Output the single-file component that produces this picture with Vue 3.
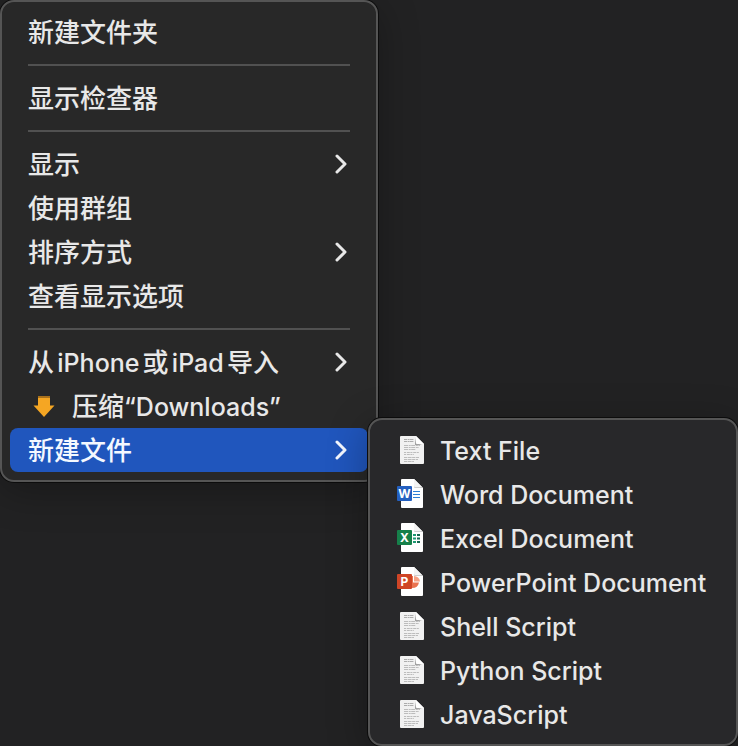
<script setup>
const groups = [
  [{ label: '新建文件夹' }],
  [{ label: '显示检查器' }],
  [
    { label: '显示', more: true },
    { label: '使用群组' },
    { label: '排序方式', more: true },
    { label: '查看显示选项' },
  ],
  [
    { label: '从iPhone或iPad导入', more: true },
    { label: '压缩“Downloads”', arrow: true },
    { label: '新建文件', more: true, active: true },
  ],
]

const files = [
  { label: 'Text File', kind: 'text' },
  { label: 'Word Document', kind: 'word', letter: 'W' },
  { label: 'Excel Document', kind: 'excel', letter: 'X' },
  { label: 'PowerPoint Document', kind: 'powerpoint', letter: 'P' },
  { label: 'Shell Script', kind: 'text' },
  { label: 'Python Script', kind: 'text' },
  { label: 'JavaScript', kind: 'text' },
]

// Splits a label into Latin and Chinese runs so that each gets its own size.
const runs = (label) => label.match(/[A-Za-z“”]+|[^A-Za-z“”]+/g)
const isLatin = (run) => /[A-Za-z]/.test(run)
</script>

<template>
  <main class="desktop">
    <nav class="menu" role="menu" lang="zh-CN">
      <div v-for="(group, g) in groups" :key="g" class="group" role="group">
        <button
          v-for="item in group"
          :key="item.label"
          type="button"
          role="menuitem"
          class="item"
          :class="{ active: item.active }"
        >
          <svg v-if="item.arrow" class="down" viewBox="0 0 32 32" aria-hidden="true">
            <path d="M10 6H22V15.500H26.500L16 27L5.500 15.500H10Z" fill="#f5a623" />
            <path d="M10 6H22V8H10Z" fill="#a9711c" />
          </svg>
          <span class="label"><span
            v-for="(run, r) in runs(item.label)"
            :key="r"
            :class="{ latin: isLatin(run) }"
          >{{ run }}</span></span>
          <svg v-if="item.more" class="chevron" viewBox="0 0 12 20" aria-hidden="true">
            <path d="M2 2L10 10L2 18" />
          </svg>
        </button>
      </div>
    </nav>

    <nav class="menu submenu" role="menu">
      <button v-for="file in files" :key="file.label" type="button" role="menuitem" class="item">
        <svg class="file" viewBox="0 0 28 32" aria-hidden="true">
          <template v-if="file.kind === 'text'">
            <path d="M4 2H19L27 10V29Q27 30 26 30H4Q3 30 3 29V3Q3 2 4 2Z" fill="#f1f1f1" />
            <g fill="none" stroke="#bcbcbc" stroke-width="1.2">
              <path d="M7 5.500H17M7 7.500H17" stroke="#acacac" stroke-dasharray="3 .6 2 .4" />
              <path d="M7 11.500H23M7 13.500H22M7 15.500H19" stroke-dasharray="4 .7 2 .5" />
              <path d="M7 18.500H22M7 20.500H17" stroke-dasharray="2 .8 3 .6" />
              <path d="M7 23.500H22M7 25.500H21M7 27.500H17" stroke-dasharray="3 .6 4 .5" />
            </g>
            <path d="M18 4V11H25L19 9Z" fill="#a2a2a2" />
            <path d="M19 2V9Q19 10 20 10H27Z" fill="#fff" />
          </template>
          <template v-else>
            <path d="M5 1H17L26 10V29Q26 30 25 30H5Q4 30 4 29V2Q4 1 5 1Z" fill="#fff" />
            <path d="M17 1V9Q17 10 18 10H26Z" fill="#cfcfcf" />
            <path d="M17 1V8Q17 9 18 9H25Z" fill="#f4f4f4" />
            <path
              v-if="file.kind === 'word'"
              d="M16 13.500H23M16 16.500H23M16 19.500H23"
              stroke="#2f7fd6"
              stroke-width="1.2"
            />
            <g v-if="file.kind === 'excel'">
              <path d="M16 12H19V14H16ZM16 15.500H19V17.500H16ZM16 19H19V21H16Z" fill="#1d9a72" />
              <path d="M20 12H23V14H20ZM20 15.500H23V17.500H20ZM20 19H23V21H20Z" fill="#176b53" />
            </g>
            <g v-if="file.kind === 'powerpoint'">
              <path d="M15 10V22A7 7 0 0 0 22 16.500H16V10Z" fill="#ea7350" />
              <path d="M17 10A6 6 0 0 1 23 15.500H17Z" fill="#f6a184" />
            </g>
            <rect x="0" y="8" width="15" height="15" rx="1" :class="['badge', file.kind]" />
            <text x="7.500" y="19.500" class="letter">{{ file.letter }}</text>
          </template>
        </svg>
        <span class="label latin">{{ file.label }}</span>
      </button>
    </nav>
  </main>
</template>

<style>
body {
  background: #222223;
}
</style>

<style scoped>
.desktop {
  display: grid;
  grid-template-columns: minmax(0, 378fr) minmax(0, 360fr);
  align-items: start;
  min-height: 100vh;
  background: #222223;
  font-family: Inter, "Noto Sans CJK SC", sans-serif;
}

.menu {
  box-sizing: border-box;
  padding: 8px;
  border: 2px solid #555555;
  border-radius: 14px;
  background: #282828;
  box-shadow: 0 0 0 1px #0c0c0c, 0 8px 40px rgba(0, 0, 0, 0.3);
}

.submenu {
  position: relative;
  margin: 418px 0 0 -10px;
  background: #28282a;
}

.group + .group::before {
  content: "";
  display: block;
  height: 2px;
  margin: 10px 18px;
  background: #515151;
}

.item {
  display: flex;
  align-items: center;
  width: 100%;
  height: 44px;
  padding: 0 18px;
  border: 0;
  border-radius: 8px;
  background: transparent;
  color: #e8e8e8;
  font: inherit;
  font-size: 26px;
  font-weight: 500;
  text-align: left;
  white-space: nowrap;
}

.item.active {
  background: #2056bd;
  color: #f4f8ff;
}

.label {
  flex: 1;
  padding-bottom: 4px;
  text-autospace: normal;
}

.latin {
  font-size: 25px;
}

.label.latin {
  padding: 2px 0 0;
}

.chevron {
  width: 12px;
  height: 20px;
  margin-right: 3px;
  fill: none;
  stroke: currentColor;
  stroke-width: 3;
  stroke-linecap: round;
  stroke-linejoin: round;
}

.down {
  width: 32px;
  height: 32px;
  margin-right: 12px;
}

.submenu .item {
  padding-left: 19px;
}

.file {
  width: 28px;
  height: 32px;
  margin-right: 15px;
}

.badge.word {
  fill: #2460c0;
}

.badge.excel {
  fill: #16804a;
}

.badge.powerpoint {
  fill: #cf4526;
}

.letter {
  fill: #ffffff;
  font-size: 12px;
  font-weight: 700;
  text-anchor: middle;
}
</style>
